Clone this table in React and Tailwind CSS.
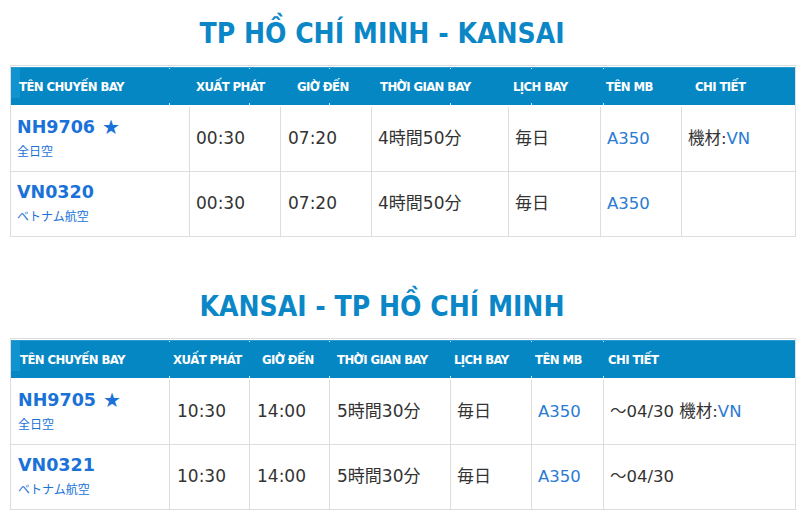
import React from "react";

const BODY = { fontFamily: '"DejaVu Sans","Noto Sans CJK JP",sans-serif' };
const COND = { fontFamily: '"DejaVu Sans Condensed","DejaVu Sans","Noto Sans CJK JP",sans-serif' };

const TICKS = [158, 238, 318, 439, 520, 592];

const tables = [
  {
    title: "TP HỒ CHÍ MINH - KANSAI",
    cols: ["w-[179px]", "w-[91px]", "w-[91px]", "w-[137px]", "w-[92px]", "w-[81px]", "w-[113px]"],
    heads: [
      ["TÊN CHUYẾN BAY", "pl-[8px]"],
      ["XUẤT PHÁT", "pl-[6px]"],
      ["GIỜ ĐẾN", "pl-[16px]"],
      ["THỜI GIAN BAY", "pl-[8px]"],
      ["LỊCH BAY", "pl-[4px]"],
      ["TÊN MB", "pl-[5px]"],
      ["CHI TIẾT", "pl-[13px]"],
    ],
    pads: ["pl-[6px]", "pl-[6px]", "pl-[7px]", "pl-[6px]", "pl-[6px]", "pl-[6px]", "pl-[6px]"],
    rows: [
      { no: "NH9706", star: true, air: "全日空", dep: "00:30", arr: "07:20", dur: "4時間50分", sched: "毎日", mb: "A350", note: "", vn: true },
      { no: "VN0320", star: false, air: "ベトナム航空", dep: "00:30", arr: "07:20", dur: "4時間50分", sched: "毎日", mb: "A350", note: "", vn: false },
    ],
  },
  {
    title: "KANSAI - TP HỒ CHÍ MINH",
    cols: ["w-[159px]", "w-[80px]", "w-[80px]", "w-[121px]", "w-[81px]", "w-[72px]", "w-[191px]"],
    heads: [
      ["TÊN CHUYẾN BAY", "pl-[9px]"],
      ["XUẤT PHÁT", "pl-[3px]"],
      ["GIỜ ĐẾN", "pl-[12px]"],
      ["THỜI GIAN BAY", "pl-[7px]"],
      ["LỊCH BAY", "pl-[3px]"],
      ["TÊN MB", "pl-[3px]"],
      ["CHI TIẾT", "pl-[4px]"],
    ],
    pads: ["pl-[7px]", "pl-[7px]", "pl-[7px]", "pl-[7px]", "pl-[6px]", "pl-[6px]", "pl-[6px]"],
    rows: [
      { no: "NH9705", star: true, air: "全日空", dep: "10:30", arr: "14:00", dur: "5時間30分", sched: "毎日", mb: "A350", note: "～04/30 ", vn: true },
      { no: "VN0321", star: false, air: "ベトナム航空", dep: "10:30", arr: "14:00", dur: "5時間30分", sched: "毎日", mb: "A350", note: "～04/30", vn: false },
    ],
  },
];

function Table({ t }) {
  return (
    <div className="border border-b-0 border-[#dddddd] w-[786px] bg-white">
      <div className="pt-px pb-[2px]">
        <div className="relative flex h-[38px] bg-[#0587c3] items-center">
          <div className="absolute left-0 top-0 w-[9px] h-[31px] bg-[#1094d0]" />
          {TICKS.map((x) => (
            <React.Fragment key={x}>
              <div className="absolute top-0 w-px h-[2px] bg-[#cfe9f6]" style={{ left: x }} />
              <div className="absolute bottom-0 w-px h-[2px] bg-[#cfe9f6]" style={{ left: x }} />
            </React.Fragment>
          ))}
          <div className="absolute left-0 right-0 top-0 h-px bg-[#2a9ad0]" />
          {t.heads.map(([h, p], i) => (
            <div
              key={i}
              className={`relative ${t.cols[i]} ${p} shrink-0 text-white font-bold text-[13px] tracking-[-0.6px] leading-none whitespace-nowrap`}
              style={COND}
            >
              {h}
            </div>
          ))}
        </div>
      </div>
      {t.rows.map((r, ri) => (
        <div key={ri} className="flex h-[65px] border-b border-[#dddddd]" style={BODY}>
          <div className={`${t.cols[0]} ${t.pads[0]} shrink-0 border-r border-[#dddddd] flex flex-col justify-center pb-[3px]`}>
            <div className="text-[17.5px] font-bold text-[#1a72d8] leading-[20px] whitespace-nowrap flex items-center">
              {r.no}
              {r.star && <span className="ml-[7px] text-[20px] leading-[20px]">★</span>}
            </div>
            <div className="text-[12px] text-[#1a72d8] leading-[16px] mt-[6px]" style={{ fontFamily: '"Noto Sans CJK JP",sans-serif' }}>
              {r.air}
            </div>
          </div>
          {[r.dep, r.arr, r.dur, r.sched].map((v, i) => (
            <div
              key={i}
              className={`${t.cols[i + 1]} ${t.pads[i + 1]} shrink-0 border-r border-[#dddddd] flex items-center text-[17px] text-[#333333] whitespace-nowrap`}
            >
              {v}
            </div>
          ))}
          <div className={`${t.cols[5]} ${t.pads[5]} shrink-0 border-r border-[#dddddd] flex items-center text-[16.5px] text-[#2a7bd4]`}>
            {r.mb}
          </div>
          <div className={`${t.cols[6]} ${t.pads[6]} shrink-0 flex items-center text-[16.5px] text-[#333333] whitespace-nowrap`}>
            {r.note}
            {r.vn && (
              <>
                機材:<span className="text-[#2a7bd4]">VN</span>
              </>
            )}
          </div>
        </div>
      ))}
    </div>
  );
}

export default function App() {
  return (
    <div className="w-[806px] h-[519px] bg-white overflow-hidden">
      <div className="w-[764px] text-center pt-[18px] h-[65px] text-[28px] font-bold text-[#0b87c7] leading-[32px]" style={COND}>
        {tables[0].title}
      </div>
      <div className="pl-[10px]">
        <Table t={tables[0]} />
      </div>
      <div className="w-[764px] text-center pt-[54px] h-[101px] text-[28px] font-bold text-[#0b87c7] leading-[32px]" style={COND}>
        {tables[1].title}
      </div>
      <div className="pl-[10px]">
        <Table t={tables[1]} />
      </div>
    </div>
  );
}
